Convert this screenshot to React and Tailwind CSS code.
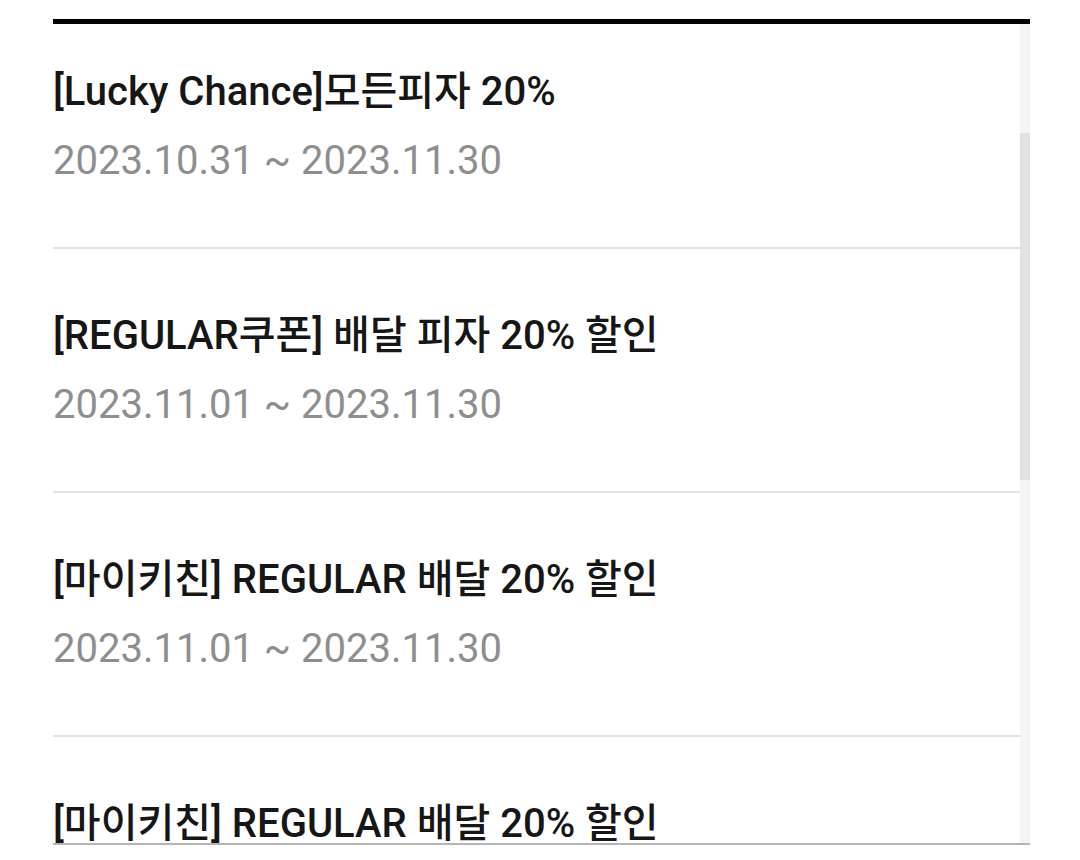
export default function App() {
    const coupons = [
        { title: "[Lucky Chance]모든피자 20%", period: "2023.10.31 ~ 2023.11.30" },
        { title: "[REGULAR쿠폰] 배달 피자 20% 할인", period: "2023.11.01 ~ 2023.11.30" },
        { title: "[마이키친] REGULAR 배달 20% 할인", period: "2023.11.01 ~ 2023.11.30" },
        { title: "[마이키친] REGULAR 배달 20% 할인", period: "2023.11.01 ~ 2023.11.30" },
    ];

    return (
        <div className="w-[1080px] h-[860px] bg-white overflow-hidden" style={{ fontFamily: 'Roboto, "Noto Sans CJK KR", sans-serif' }}>
            <div className="ml-[53px] w-[977px] pt-[19px]">
                <div className="border-t-[5px] border-black" />
                <div className="flex h-[821px] border-b-2 border-[#b4b4b4]">
                    <ul className="flex-1 overflow-hidden">
                        {coupons.map((coupon, index) => (
                            <li
                                key={index}
                                className={`pb-[56px] border-b-2 border-[#e2e2e2] ${index === 0 ? "pt-[38px]" : "pt-[57px]"}`}
                            >
                                <p className="text-[40px] leading-[60px] font-medium text-[#161616] whitespace-nowrap">
                                    {coupon.title}
                                </p>
                                <p className="mt-[9px] text-[40px] leading-[60px] text-[#8e8e8e] whitespace-nowrap">
                                    {coupon.period}
                                </p>
                            </li>
                        ))}
                    </ul>
                    <div className="w-[10px] bg-[#f4f4f4]">
                        <div className="mt-[109px] h-[347px] bg-[#e2e2e2]" />
                    </div>
                </div>
            </div>
        </div>
    );
}
